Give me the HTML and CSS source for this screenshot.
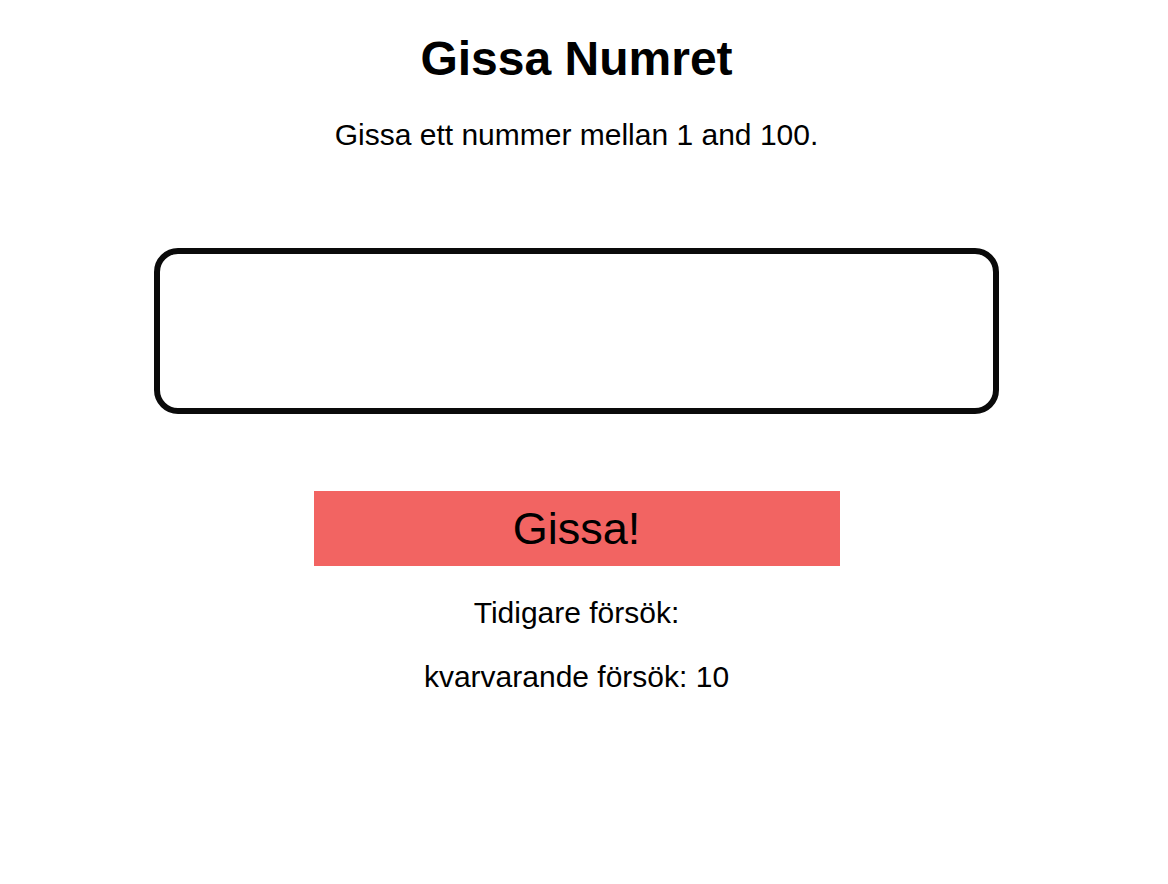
FILE: index.html
```html
<!DOCTYPE html>
<html lang="sv">
<head>
<meta charset="utf-8">
<title>Gissa Numret</title>
<link rel="stylesheet" href="styles.css">
</head>
<body>
<main class="game">
  <h1 class="title">Gissa Numret</h1>
  <p class="intro">Gissa ett nummer mellan 1 and 100.</p>
  <input class="guess-input" type="text" aria-label="Gissning">
  <button class="guess-btn" type="button">Gissa!</button>
  <p class="info">Tidigare försök:</p>
  <p class="info">kvarvarande försök: 10</p>
</main>
</body>
</html>
```

FILE: styles.css
```css
html, body {
  margin: 0;
  padding: 0;
  background: #ffffff;
}
body {
  font-family: "Liberation Sans", Arial, sans-serif;
  color: #000000;
}
.game {
  width: 1153px;
  display: flex;
  flex-direction: column;
  align-items: center;
  text-align: center;
}
.title {
  margin: 31px 0 0;
  font-size: 48px;
  font-weight: bold;
  line-height: 55px;
}
.intro {
  margin: 32px 0 0;
  font-size: 30px;
  line-height: 34px;
}
.guess-input {
  box-sizing: border-box;
  margin-top: 96px;
  width: 845px;
  height: 166px;
  border: 6px solid #0a0a0a;
  border-radius: 24px;
  background: #ffffff;
  font-size: 40px;
  font-family: inherit;
  padding: 0 20px;
  outline: none;
}
.guess-btn {
  margin-top: 77px;
  width: 526px;
  height: 75px;
  border: none;
  background: #f26462;
  color: #000000;
  font-family: inherit;
  font-size: 45px;
  padding: 0;
  cursor: pointer;
}
.info {
  margin: 0;
  font-size: 30px;
  line-height: 34px;
}
.guess-btn + .info {
  margin-top: 30px;
}
.info + .info {
  margin-top: 30px;
}
```
